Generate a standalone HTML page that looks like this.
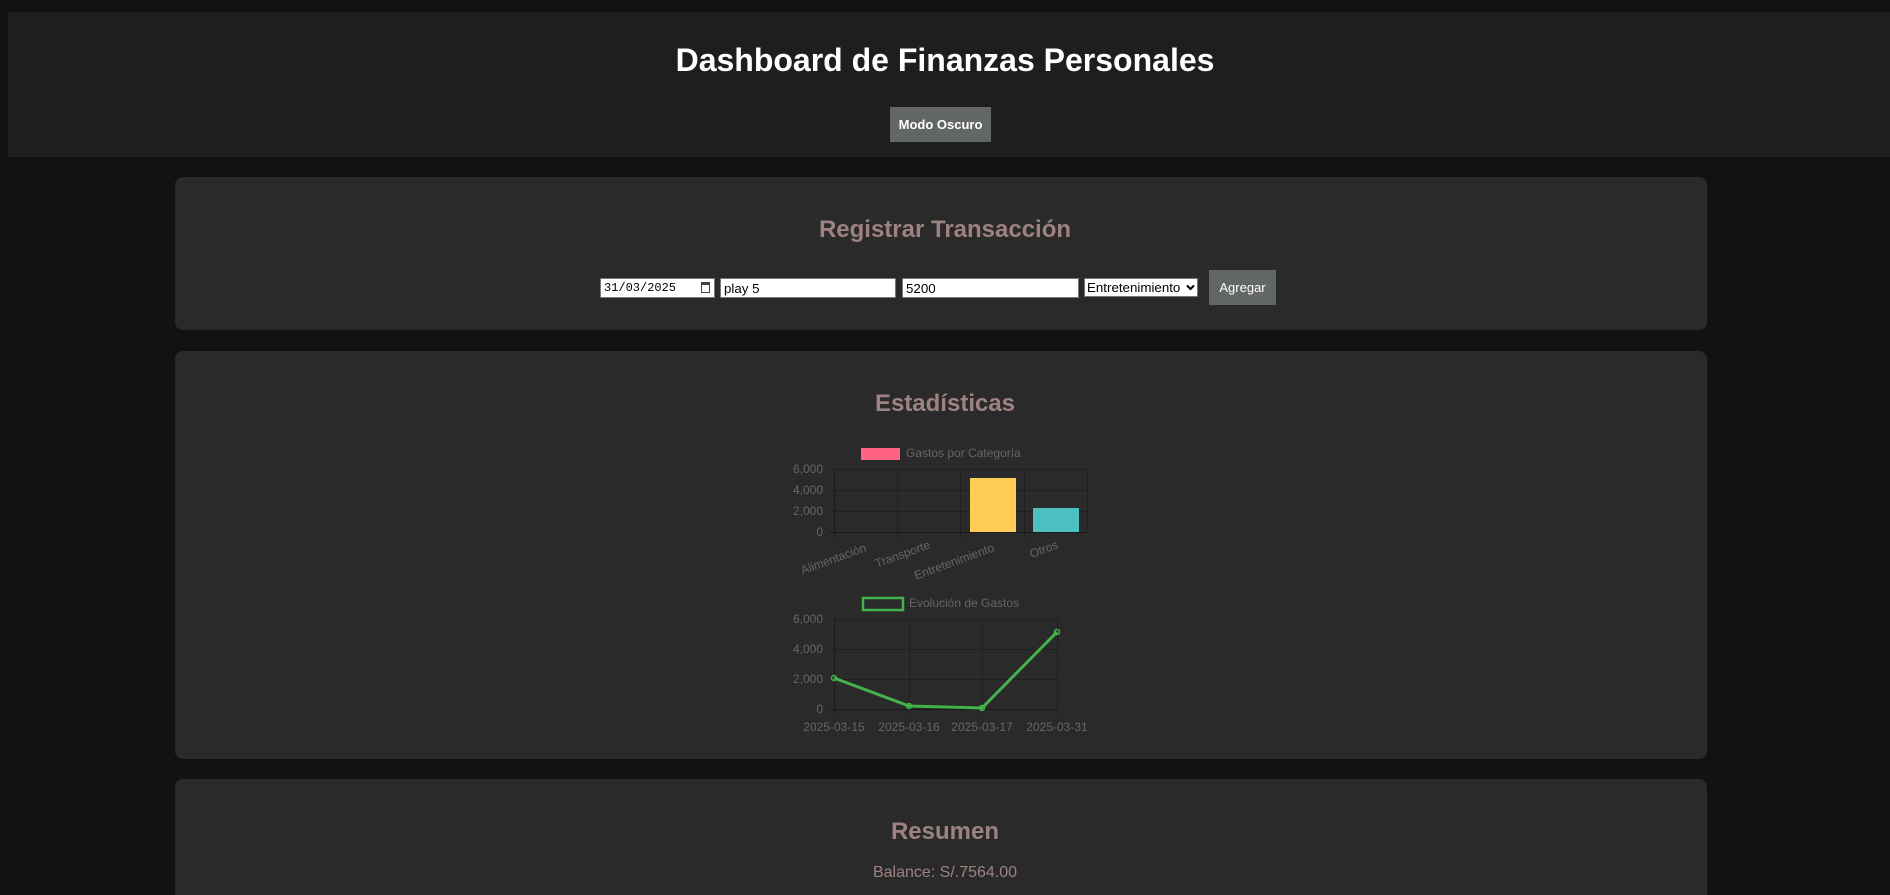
<!DOCTYPE html>
<html style="height:895px;overflow:hidden"><head><meta charset="utf-8"><style>
*{box-sizing:border-box;margin:0;padding:0}
body{width:1890px;height:895px;overflow:hidden;background:#121212;font-family:"Liberation Sans",Arial,sans-serif;position:relative}
.abs{position:absolute}
.hdr{left:8px;top:12px;width:1882px;height:145px;background:#1e1e1e}
.card{left:175px;width:1532px;background:#2a2a2a;border-radius:8px}
.t{left:0;width:1890px;text-align:center}
h1{font-size:32px;color:#fff;font-weight:bold}
h2{font-size:24px;color:#9e8282;font-weight:bold}
.btn{background:#636763;color:#fff;font-size:13px;font-weight:bold;display:flex;align-items:center;justify-content:center}
.inp{background:#fff;border:1px solid #767676;height:20px;top:278px;font-size:13.33px;color:#000;padding:2px 3px;line-height:15px}
</style></head><body>
<div class="abs hdr"></div>
<h1 class="abs t" style="top:42px">Dashboard de Finanzas Personales</h1>
<div class="abs btn" style="left:890px;top:107px;width:101px;height:35px">Modo Oscuro</div>

<div class="abs card" style="top:177px;height:153px"></div>
<h2 class="abs t" style="top:216px">Registrar Transacción</h2>
<div class="abs inp" style="left:600px;width:115px;font-family:'Liberation Mono',monospace;font-size:12px">31/03/2025<span style="position:absolute;right:4px;top:3px;width:9px;height:11px;border:1.5px solid #444;border-top-width:3px"></span></div>
<div class="abs inp" style="left:720px;width:176px">play 5</div>
<div class="abs inp" style="left:902px;width:177px">5200</div>
<div class="abs inp" style="left:1084px;width:114px;height:19px;padding:1px 2px;white-space:nowrap;overflow:hidden">Entretenimiento<svg style="position:absolute;right:2px;top:5px" width="9" height="7"><path d="M1 1.5L4.5 5 8 1.5" fill="none" stroke="#000" stroke-width="2"/></svg></div>
<div class="abs btn" style="left:1209px;top:270px;width:67px;height:35px;font-weight:normal">Agregar</div>

<div class="abs card" style="top:351px;height:408px"></div>
<h2 class="abs t" style="top:390px">Estadísticas</h2>
<svg class="abs" style="left:0;top:0" width="1890" height="895" font-family="Liberation Sans,Arial,sans-serif" font-size="12" fill="#666">
<rect x="861" y="448" width="39" height="12" fill="#ff6384"/>
<text x="906" y="457">Gastos por Categoría</text>
<g stroke="#1f1f1f" stroke-width="1">
<line x1="834" y1="469.5" x2="1087" y2="469.5"/><line x1="834" y1="490.5" x2="1087" y2="490.5"/><line x1="834" y1="511.5" x2="1087" y2="511.5"/>
<line x1="897.5" y1="469" x2="897.5" y2="538"/><line x1="960.5" y1="469" x2="960.5" y2="538"/><line x1="1024.5" y1="469" x2="1024.5" y2="538"/><line x1="1087.5" y1="469" x2="1087.5" y2="532"/>
</g>
<line x1="834.5" y1="469" x2="834.5" y2="538" stroke="#1a1a1a"/>
<line x1="829" y1="532.5" x2="1087" y2="532.5" stroke="#1a1a1a"/>
<rect x="970" y="478" width="46" height="54" fill="#ffcd56"/>
<rect x="1033" y="508" width="46" height="24" fill="#4bc0c0"/>
<g text-anchor="end"><text x="823" y="473">6,000</text><text x="823" y="494">4,000</text><text x="823" y="515">2,000</text><text x="823" y="536">0</text></g>
<g text-anchor="end">
<text transform="translate(867,551) rotate(-20)">Alimentación</text>
<text transform="translate(931,548) rotate(-20)">Transporte</text>
<text transform="translate(995,551) rotate(-20)">Entretenimiento</text>
<text transform="translate(1059,548) rotate(-20)">Otros</text>
</g>
<rect x="863" y="598" width="40" height="12" fill="none" stroke="#45b14a" stroke-width="2.5"/>
<text x="909" y="607">Evolución de Gastos</text>
<g stroke="#1f1f1f"><line x1="834" y1="619.5" x2="1057" y2="619.5"/><line x1="834" y1="649.5" x2="1057" y2="649.5"/><line x1="834" y1="679.5" x2="1057" y2="679.5"/>
<line x1="909.5" y1="619" x2="909.5" y2="714"/><line x1="982.5" y1="619" x2="982.5" y2="714"/><line x1="1057.5" y1="619" x2="1057.5" y2="714"/></g>
<line x1="834.5" y1="619" x2="834.5" y2="714" stroke="#1a1a1a"/>
<line x1="829" y1="709.5" x2="1057" y2="709.5" stroke="#1a1a1a"/>
<polyline points="834,678 909,706 982,708 1057,632" fill="none" stroke="#45b14a" stroke-width="3"/>
<g fill="none" stroke="#45b14a" stroke-width="1.5"><circle cx="834" cy="678" r="2.5"/><circle cx="909" cy="706" r="2.5"/><circle cx="982" cy="708" r="2.5"/><circle cx="1057" cy="632" r="2.5"/></g>
<g text-anchor="end"><text x="823" y="623">6,000</text><text x="823" y="653">4,000</text><text x="823" y="683">2,000</text><text x="823" y="713">0</text></g>
<g text-anchor="middle"><text x="834" y="731">2025-03-15</text><text x="909" y="731">2025-03-16</text><text x="982" y="731">2025-03-17</text><text x="1057" y="731">2025-03-31</text></g>
</svg>

<div class="abs card" style="top:779px;height:116px;border-radius:8px 8px 0 0"></div>
<h2 class="abs t" style="top:818px">Resumen</h2>
<div class="abs t" style="top:864px;font-size:16px;color:#9e8282">Balance: S/.7564.00</div>
</body></html>
